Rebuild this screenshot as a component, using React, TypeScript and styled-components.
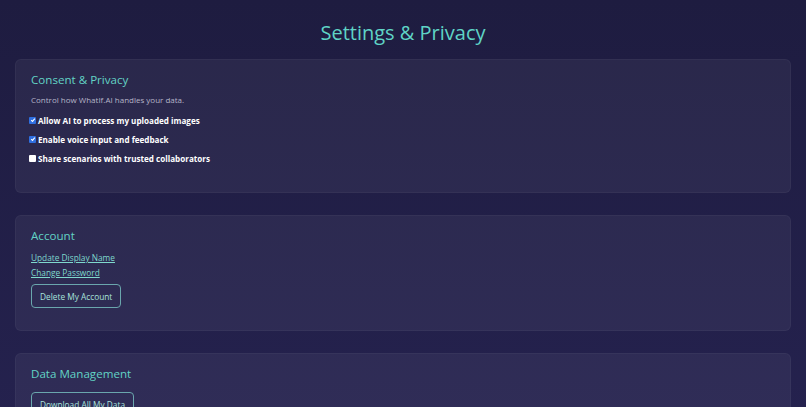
import React, { ReactElement, ReactNode } from 'react'
import styled, { createGlobalStyle } from 'styled-components'

const GlobalStyle = createGlobalStyle`
  html, body {
    margin: 0;
    padding: 0;
  }
  body {
    background: linear-gradient(180deg, #1e1c40 0%, #25224f 100%);
    min-height: 100vh;
    font-family: 'Open Sans', 'Liberation Sans', sans-serif;
    color: #ffffff;
  }
`

const Page = styled.div`
  padding: 17px 15px 0 15px;
  display: flex;
  flex-direction: column;
`

const Title = styled.h1`
  margin: 0 0 10px 0;
  text-align: center;
  font-size: 20px;
  font-weight: 400;
  color: #5fd4c6;
  line-height: 32px;
`

const Sections = styled.div`
  display: flex;
  flex-direction: column;
  gap: 22px;
`

const Card = styled.section`
  background: rgba(255, 255, 255, 0.05);
  border: 1px solid rgba(255, 255, 255, 0.04);
  border-radius: 6px;
  padding: 12px 15px 22px 15px;
  display: flex;
  flex-direction: column;
  align-items: flex-start;
`

const Heading = styled.h2`
  margin: 0 0 6px 0;
  font-size: 11.6px;
  font-weight: 400;
  line-height: 16px;
  color: #62d3c5;
`

const Description = styled.p`
  margin: 0 0 4.5px 0;
  font-size: 8px;
  line-height: 12px;
  color: #b5b4c8;
`

const CheckList = styled.div`
  display: flex;
  flex-direction: column;
  margin-bottom: 2.5px;
`

const CheckRow = styled.label`
  display: flex;
  align-items: center;
  gap: 2px;
  height: 19px;
  font-size: 8.1px;
  font-weight: 700;
  color: #ffffff;
`

const Box = styled.span<{ checked: boolean }>`
  width: 7px;
  height: 7px;
  border-radius: 1px;
  background: ${(p) => (p.checked ? '#2f6fe0' : '#ffffff')};
  display: inline-flex;
  align-items: center;
  justify-content: center;
  margin-left: -2px;
`

const LinkText = styled.a`
  font-size: 8.3px;
  line-height: 15px;
  color: #7fd9cd;
  text-decoration: underline;
  cursor: pointer;
`

const OutlineButton = styled.button`
  margin-top: 4px;
  height: 24px;
  padding: 0 8px;
  background: transparent;
  border: 1px solid #6aa6ad;
  border-radius: 4px;
  color: #a8e3dc;
  font-family: 'Open Sans', 'Liberation Sans', sans-serif;
  font-size: 8.3px;
`

function Checkbox({ checked, children }: { checked: boolean; children: ReactNode }): ReactElement {
  return (
    <CheckRow>
      <Box checked={checked}>
        {checked && (
          <svg width="6" height="6" viewBox="0 0 10 10">
            <path d="M2 5.2 L4.2 7.4 L8 2.8" fill="none" stroke="#ffffff" strokeWidth="1.8" />
          </svg>
        )}
      </Box>
      {children}
    </CheckRow>
  )
}

function App(): ReactElement {
  return (
    <>
      <GlobalStyle />
      <Page>
        <Title>Settings &amp; Privacy</Title>
        <Sections>
          <Card>
            <Heading>Consent &amp; Privacy</Heading>
            <Description>Control how WhatIf.AI handles your data.</Description>
            <CheckList>
              <Checkbox checked>Allow AI to process my uploaded images</Checkbox>
              <Checkbox checked>Enable voice input and feedback</Checkbox>
              <Checkbox checked={false}>Share scenarios with trusted collaborators</Checkbox>
            </CheckList>
          </Card>
          <Card>
            <Heading>Account</Heading>
            <LinkText>Update Display Name</LinkText>
            <LinkText>Change Password</LinkText>
            <OutlineButton>Delete My Account</OutlineButton>
          </Card>
          <Card>
            <Heading>Data Management</Heading>
            <OutlineButton>Download All My Data</OutlineButton>
          </Card>
        </Sections>
      </Page>
    </>
  )
}

export default App
